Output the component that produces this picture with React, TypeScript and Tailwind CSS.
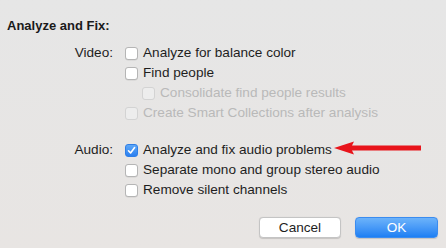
import type { ReactNode } from "react";

function Box({ checked, disabled }: { checked?: boolean; disabled?: boolean }) {
  if (checked) {
    return (
      <span className="flex size-[13px] shrink-0 items-center justify-center rounded-[3px] bg-gradient-to-b from-[#5ea8f7] to-[#2a7ff0] border border-[#2f7ee6]">
        <svg width="9" height="9" viewBox="0 0 9 9">
          <path d="M1.5 4.8 L3.6 7 L7.6 1.6" fill="none" stroke="white" strokeWidth="1.6" strokeLinecap="round" strokeLinejoin="round" />
        </svg>
      </span>
    );
  }
  return (
    <span
      className={
        disabled
          ? "size-[13px] shrink-0 rounded-[3px] border border-[#d3d3d3] bg-[#ededed]"
          : "size-[13px] shrink-0 rounded-[3px] border border-[#b5b5b5] bg-white shadow-[0_0.5px_0.5px_rgba(0,0,0,0.1)]"
      }
    />
  );
}

function Option({
  children,
  checked,
  disabled,
  indent,
}: {
  children: ReactNode;
  checked?: boolean;
  disabled?: boolean;
  indent?: boolean;
}) {
  return (
    <div className={`flex h-5 items-center gap-[5px] ${indent ? "pl-[17px]" : ""}`}>
      <Box checked={checked} disabled={disabled} />
      <span className={disabled ? "text-[#b9b9b9]" : "text-[#1e1e1e]"}>{children}</span>
    </div>
  );
}

function Group({ label, children }: { label: string; children: ReactNode }) {
  return (
    <div className="flex">
      <div className="flex h-5 w-[125px] items-center justify-end pr-[12px] text-[#1e1e1e]">{label}</div>
      <div className="flex flex-col">{children}</div>
    </div>
  );
}

export default function App() {
  return (
    <div
      className="relative flex h-[248px] w-[446px] flex-col bg-gradient-to-b from-[#e6e6e6] to-[#e8e5e3] text-[13.6px] leading-none"
      style={{ fontFamily: '"Liberation Sans", Arial, sans-serif' }}
    >
      <div className="pl-[7px] pt-[19px] text-[13px] font-bold text-[#1a1a1a]">Analyze and Fix:</div>

      <div className="mt-[11px]">
        <Group label="Video:">
          <Option>Analyze for balance color</Option>
          <Option>Find people</Option>
          <Option indent disabled>
            Consolidate find people results
          </Option>
          <Option disabled>Create Smart Collections after analysis</Option>
        </Group>
      </div>

      <div className="mt-[17px]">
        <Group label="Audio:">
          <Option checked>Analyze and fix audio problems</Option>
          <Option>Separate mono and group stereo audio</Option>
          <Option>Remove silent channels</Option>
        </Group>
      </div>

      <div className="mt-[17px] flex justify-end gap-[14px] pr-[8px]">
        <button className="h-[21px] w-[82px] rounded-[4px] border border-[#c4c4c4] bg-white text-[13.6px] text-[#1e1e1e] shadow-[0_0.5px_1px_rgba(0,0,0,0.15)]">
          Cancel
        </button>
        <button className="h-[21px] w-[83px] rounded-[4px] border border-[#3b8cf0] bg-gradient-to-b from-[#6cb3fa] to-[#1c7ff3] text-[13.6px] text-white shadow-[0_0.5px_1px_rgba(0,0,0,0.15)]">
          OK
        </button>
      </div>

      {/* red annotation arrow */}
      <svg className="absolute left-[334px] top-[141px]" width="88" height="14" viewBox="0 0 88 14">
        <path d="M0 7 L20 0.5 L18 4.5 L87 4.5 L87 9.5 L18 9.5 L20 13.5 Z" fill="#e8141b" />
      </svg>
    </div>
  );
}
